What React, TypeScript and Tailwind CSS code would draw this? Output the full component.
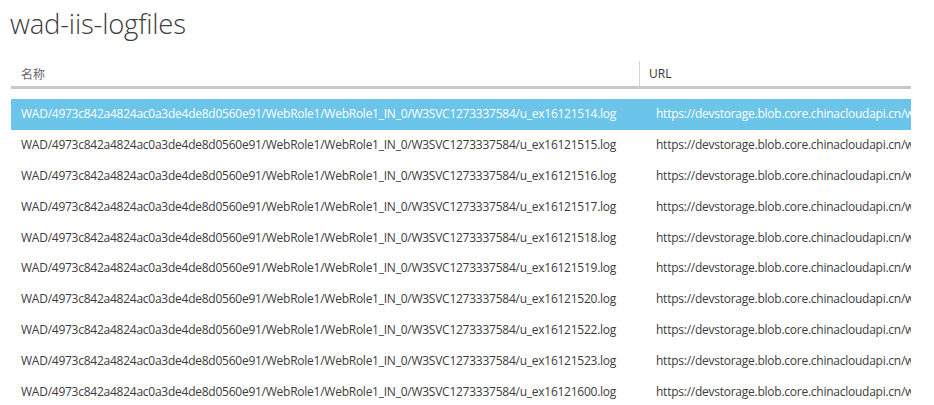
import React from 'react';

const BLOB_PREFIX = 'WAD/4973c842a4824ac0a3de4de8d0560e91/WebRole1/WebRole1_IN_0/W3SVC1273337584/u_ex';
const URL_TEXT = 'https://devstorage.blob.core.chinacloudapi.cn/wad-iis-logfiles/';

const FILES = ['16121514', '16121515', '16121516', '16121517', '16121518', '16121519', '16121520', '16121522', '16121523', '16121600'];

const App: React.FC = () => {
  return (
    <div className="w-[934px] h-[405px] overflow-hidden bg-white font-['Open_Sans',sans-serif] text-[#444]">
      <h1 className="pl-[10px] pt-[3px] h-[61px] text-[27.5px] font-light text-[#3d3d3d] tracking-[-0.2px]">wad-iis-logfiles</h1>

      <div className="ml-[11px] w-[900px]">
        <div className="flex h-[25px] items-center text-[12px] text-[#666]">
          <div className="w-[628px] pl-[10px] font-['Noto_Sans_CJK_SC',sans-serif]">名称</div>
          <div className="h-full border-l border-[#d4d4d4] pl-[9px] flex items-center text-[#333]">URL</div>
        </div>
        <div className="h-[3px] bg-[#c8c8c8]" />

        <div className="mt-[10px]">
          {FILES.map((id, i) => (
            <div
              key={id}
              className={
                i === 0
                  ? 'flex items-center h-[30.8px] bg-[#6bc4ea] text-white text-[12px] whitespace-nowrap overflow-hidden tracking-[-0.25px]'
                  : 'flex items-center h-[30.8px] text-[#3c3c3c] text-[12px] whitespace-nowrap overflow-hidden tracking-[-0.25px]'
              }
            >
              <div className="w-[635px] shrink-0 pl-[10px] overflow-hidden">
                {BLOB_PREFIX}
                {id}.log
              </div>
              <div className="pl-[10px] overflow-hidden">{URL_TEXT}</div>
            </div>
          ))}
        </div>
      </div>
    </div>
  );
};

export default App;
